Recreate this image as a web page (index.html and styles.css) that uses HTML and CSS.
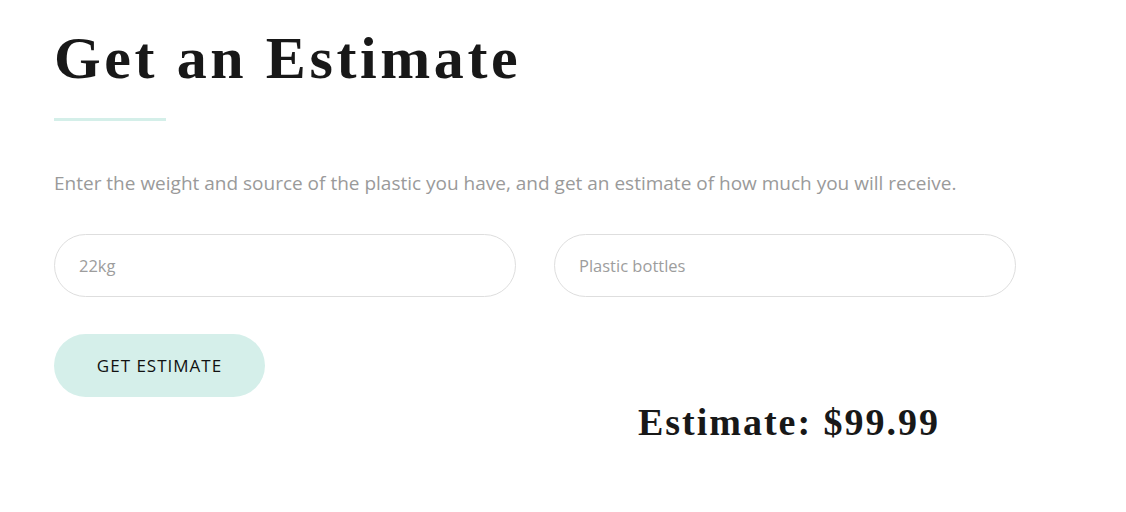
FILE: index.html
```html
<!DOCTYPE html>
<html>
<head>
<meta charset="utf-8">
<link rel="stylesheet" href="styles.css">
</head>
<body>
<section class="estimate">
  <h1 class="title">Get an Estimate</h1>
  <div class="rule"></div>
  <p class="lead">Enter the weight and source of the plastic you have, and get an estimate of how much you will receive.</p>
  <form class="form">
    <div class="fields">
      <input class="field" type="text" placeholder="22kg">
      <input class="field" type="text" placeholder="Plastic bottles">
    </div>
    <div class="actions">
      <button class="btn" type="button">Get Estimate</button>
      <div class="result">Estimate: $99.99</div>
    </div>
  </form>
</section>
</body>
</html>
```
FILE: styles.css
```css
* { box-sizing: border-box; }
html, body { margin: 0; padding: 0; background: #fff; }
.estimate {
  padding: 20px 54px 0 54px;
  box-sizing: content-box;
  width: 962px;
}
.title {
  font-family: "Liberation Serif", "Times New Roman", serif;
  font-weight: 700;
  font-size: 60px;
  letter-spacing: 3.6px;
  line-height: 72px;
  color: #181818;
  margin: 0;
  padding-top: 2px;
}
.rule {
  width: 112px;
  height: 3px;
  background: #d4efe9;
  margin-top: 24px;
}
.lead {
  font-family: "Open Sans", "Noto Sans", sans-serif;
  font-size: 19px;
  color: #9a9a9a;
  margin: 49px 0 0 0;
  line-height: 26px;
}
.form { margin-top: 38px; }
.fields {
  display: grid;
  grid-template-columns: 1fr 1fr;
  gap: 38px;
}
.field {
  height: 63px;
  border: 1px solid #dedede;
  border-radius: 32px;
  padding: 0 24px;
  font-family: "Open Sans", "Noto Sans", sans-serif;
  font-size: 16.5px;
  color: #333;
  background: #fff;
  outline: none;
}
.field::placeholder { color: #9d9d9d; }
.actions {
  display: grid;
  grid-template-columns: 1fr 1fr;
  gap: 38px;
  margin-top: 37px;
}
.btn {
  justify-self: start;
  width: 211px;
  height: 63px;
  border: none;
  border-radius: 32px;
  background: #d5efea;
  font-family: "Open Sans", "Noto Sans", sans-serif;
  font-size: 17px;
  font-weight: 500;
  letter-spacing: 1px;
  text-transform: uppercase;
  color: #111;
  cursor: pointer;
}
.result {
  font-family: "Liberation Serif", "Times New Roman", serif;
  font-weight: 700;
  font-size: 38px;
  letter-spacing: 2px;
  color: #181818;
  text-align: center;
  padding-top: 66px;
  padding-left: 8px;
}
```
